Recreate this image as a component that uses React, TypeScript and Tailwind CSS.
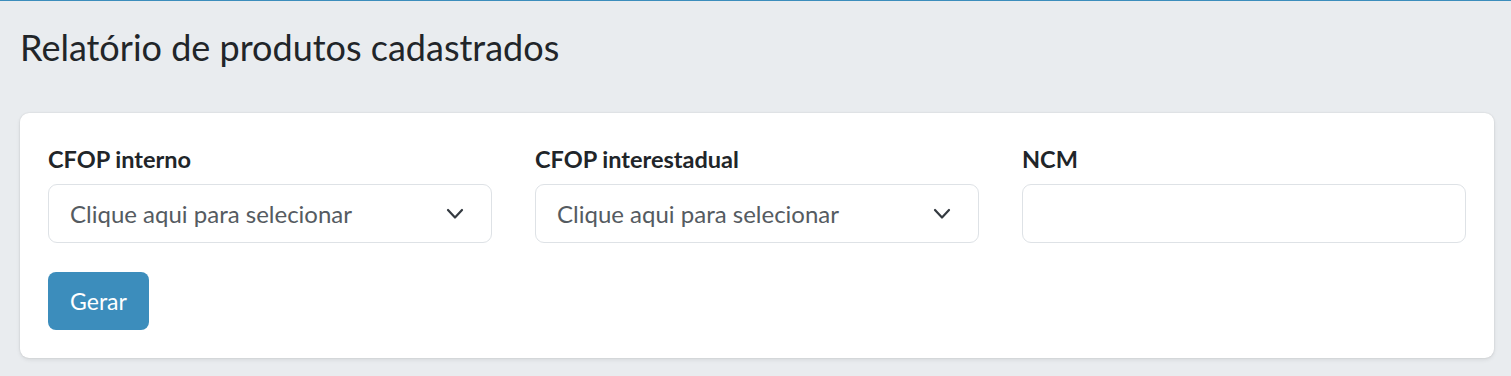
import React from "react";

function Chevron() {
  return (
    <svg width="18" height="12" viewBox="0 0 18 12" fill="none" className="shrink-0">
      <path d="M2 2 L9 9.5 L16 2" stroke="#343a40" strokeWidth="2.2" strokeLinecap="round" strokeLinejoin="round" />
    </svg>
  );
}

function SelectBox() {
  return (
    <div className="h-[59px] w-full flex items-center justify-between rounded-[9px] border border-[#dee2e6] bg-white pl-[21px] pr-[27px]">
      <span className="text-[24px] text-[#555b61]">Clique aqui para selecionar</span>
      <Chevron />
    </div>
  );
}

export default function App() {
  return (
    <div
      className="min-h-screen bg-[#e9ecef] border-t border-[#3c8dbc] text-[#212529]"
      style={{ fontFamily: "Lato, 'Noto Sans', sans-serif" }}
    >
      <div className="px-5 pt-[25px]">
        <h1 className="text-[36px] leading-[1.2] font-normal text-[#212529]">Relatório de produtos cadastrados</h1>
      </div>
      <div className="ml-5 mr-[17px] mt-[44px] rounded-[9px] bg-white p-7 shadow-[0_0_2px_rgba(0,0,0,0.12),0_2px_4px_rgba(0,0,0,0.08)]">
        <div className="grid grid-cols-3 gap-x-[43px]">
          <div>
            <div className="text-[23.5px] font-bold leading-[36px] mb-[7px]">CFOP interno</div>
            <SelectBox />
          </div>
          <div>
            <div className="text-[23.5px] font-bold leading-[36px] mb-[7px]">CFOP interestadual</div>
            <SelectBox />
          </div>
          <div>
            <div className="text-[23.5px] font-bold leading-[36px] mb-[7px]">NCM</div>
            <div className="h-[59px] w-full rounded-[9px] border border-[#dee2e6] bg-white" />
          </div>
        </div>
        <button className="mt-[29px] h-[58px] w-[101px] rounded-[8px] bg-[#3c8dbc] text-[23px] text-white">Gerar</button>
      </div>
    </div>
  );
}
